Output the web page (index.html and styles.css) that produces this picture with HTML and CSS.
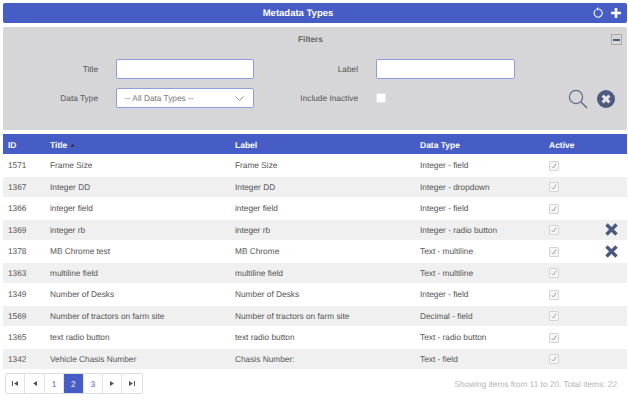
FILE: index.html
```html
<!DOCTYPE html>
<html lang="en">
<head>
    <meta charset="UTF-8">
    <title>Metadata Types</title>
    <link rel="stylesheet" href="styles.css">
</head>
<body>
    <div class="title-bar">
        <span class="title-text">Metadata Types</span>
        <div class="title-icons">
            <svg width="12" height="12" viewBox="0 0 12 12"><path d="M3.6 2.9A4.1 4.1 0 1 0 6.6 2" fill="none" stroke="#fff" stroke-width="1.1"/><path d="M6.4 0.2V3.8L3.9 2Z" fill="#fff"/></svg>
            <svg width="12" height="12" viewBox="0 0 12 12"><path d="M6 1V11M1 6H11" stroke="#fff" stroke-width="2.6"/></svg>
        </div>
    </div>

    <div class="filters">
        <div class="filters-head">
            <span>Filters</span>
            <span class="collapse"></span>
        </div>
        <div class="filter-grid">
            <label>Title</label>
            <input class="text-input" type="text">
            <label>Label</label>
            <input class="text-input" type="text">
            <span></span>

            <label>Data Type</label>
            <div class="text-input select">
                <span>-- All Data Types --</span>
                <svg width="9" height="5" viewBox="0 0 9 5"><path d="M0.5 0.5L4.5 4.5L8.5 0.5" fill="none" stroke="#777" stroke-width="0.8"/></svg>
            </div>
            <label>Include Inactive</label>
            <div class="check-wrap"><span class="white-check"></span></div>
            <div class="filter-actions">
                <svg width="20" height="20" viewBox="0 0 20 20"><circle cx="8" cy="8" r="6.6" fill="none" stroke="#5d6988" stroke-width="1.2"/><path d="M12.8 12.8L19 19" stroke="#5d6988" stroke-width="1.4"/></svg>
                <svg width="18" height="18" viewBox="0 0 18 18"><circle cx="9" cy="9" r="9" fill="#4d5a80"/><path d="M5.6 5.6L12.4 12.4M12.4 5.6L5.6 12.4" stroke="#e6e6e6" stroke-width="3"/></svg>
            </div>
        </div>
    </div>

    <table class="grid">
        <thead>
            <tr>
                <th class="col-id">ID</th>
                <th class="col-title">Title <span class="sort">&#9650;</span></th>
                <th class="col-label">Label</th>
                <th class="col-type">Data Type</th>
                <th class="col-active">Active</th>
                <th class="col-del"></th>
            </tr>
        </thead>
        <tbody id="rows"></tbody>
    </table>

    <div class="footer">
        <div class="pager">
            <a class="arrow"><svg width="6" height="5" viewBox="0 0 6 5"><path d="M0 0H1V5H0ZM6 0V5L2 2.5Z" fill="#555"/></svg></a>
            <a class="arrow"><svg width="4" height="5" viewBox="0 0 4 5"><path d="M4 0V5L0 2.5Z" fill="#555"/></svg></a>
            <a>1</a>
            <a class="current">2</a>
            <a>3</a>
            <a class="arrow"><svg width="4" height="5" viewBox="0 0 4 5"><path d="M0 0V5L4 2.5Z" fill="#555"/></svg></a>
            <a class="arrow"><svg width="6" height="5" viewBox="0 0 6 5"><path d="M0 0V5L4 2.5ZM5 0H6V5H5Z" fill="#555"/></svg></a>
        </div>
        <span class="summary">Showing items from 11 to 20. Total items: 22</span>
    </div>

    <script>
        const rows = [
            [1571, 'Frame Size', 'Frame Size', 'Integer - field'],
            [1367, 'Integer DD', 'Integer DD', 'Integer - dropdown'],
            [1366, 'integer field', 'integer field', 'Integer - field'],
            [1369, 'integer rb', 'integer rb', 'Integer - radio button', true],
            [1378, 'MB Chrome test', 'MB Chrome', 'Text - multiline', true],
            [1363, 'multiline field', 'multiline field', 'Text - multiline'],
            [1349, 'Number of Desks', 'Number of Desks', 'Integer - field'],
            [1569, 'Number of tractors on farm site', 'Number of tractors on farm site', 'Decimal - field'],
            [1365, 'text radio button', 'text radio button', 'Text - radio button'],
            [1342, 'Vehicle Chasis Number', 'Chasis Number:', 'Text - field']
        ];
        const check = '<span class="check"><svg width="6" height="6" viewBox="0 0 6 6"><path d="M0.8 3.4L2.4 5L5.2 0.6" fill="none" stroke="#999" stroke-width="0.9"/></svg></span>';
        const del = '<svg class="del" width="13" height="13" viewBox="0 0 13 13"><path d="M1.5 1.5L11.5 11.5M11.5 1.5L1.5 11.5" stroke="#4d5a80" stroke-width="3.4"/></svg>';

        document.getElementById('rows').innerHTML = rows.map(r =>
            `<tr><td>${r[0]}</td><td>${r[1]}</td><td>${r[2]}</td><td>${r[3]}</td><td>${check}</td><td class="del-cell">${r[4] ? del : ''}</td></tr>`
        ).join('');
    </script>
</body>
</html>
```

FILE: styles.css
```css
* {
    box-sizing: border-box;
}
body {
    margin: 0;
    padding: 3px 1px 0 3px;
    font-family: "Liberation Sans", Arial, sans-serif;
    font-size: 8.3px;
    text-rendering: geometricPrecision;
    color: #555;
    background: #fff;
}
.title-bar {
    position: relative;
    display: flex;
    justify-content: center;
    align-items: center;
    height: 20px;
    padding-right: 34px;
    background: #475dc6;
    border-radius: 2px;
    color: #fff;
    font-size: 9.5px;
    font-weight: bold;
}
.title-icons {
    position: absolute;
    right: 5px;
    top: 4px;
    display: flex;
    gap: 6px;
}
.filters {
    margin-top: 4px;
    height: 103px;
    background: #d6d6d8;
    border-radius: 2px;
}
.filters-head {
    position: relative;
    padding: 7px 9px 0 0;
    text-align: center;
    font-weight: bold;
    line-height: 10px;
    color: #666;
}
.collapse {
    position: absolute;
    right: 5px;
    top: 7px;
    width: 11px;
    height: 11px;
    border: 1px solid #aaa;
    background: linear-gradient(#4d5a80, #4d5a80) center / 7px 2px no-repeat;
}
.filter-grid {
    display: grid;
    grid-template-columns: 113px 138px 122px 139px 1fr;
    grid-template-rows: 20px 20px;
    row-gap: 9px;
    margin-top: 15px;
    align-items: center;
}
.filter-grid label {
    text-align: right;
    padding-right: 18px;
}
.text-input {
    height: 20px;
    border: 1px solid #8f9cdd;
    border-radius: 2px;
    background: #fff;
    padding: 0;
}
.select {
    display: flex;
    justify-content: space-between;
    align-items: center;
    padding: 0 9px 0 8px;
    color: #777;
}
.check-wrap {
    display: flex;
}
.white-check {
    width: 10px;
    height: 10px;
    background: #fff;
    border: 1px solid #dfe2f4;
    border-radius: 1px;
}
.filter-actions {
    display: flex;
    align-items: center;
    gap: 9px;
    justify-content: flex-end;
    padding: 2px 12px 0 0;
}
.grid {
    width: 624px;
    margin-top: 4px;
    border-collapse: separate;
    border-spacing: 0;
    table-layout: fixed;
}
.grid th {
    height: 21px;
    padding: 1px 0 0 5px;
    background: #475dc6;
    background-clip: padding-box;
    border-bottom: 1px solid #fff;
    color: #fff;
    font-size: 8.5px;
    text-align: left;
}
.grid .sort {
    font-size: 6px;
    color: #333;
    vertical-align: 1px;
}
.col-id { width: 42px; }
.col-title { width: 185px; }
.col-label { width: 185px; }
.col-type { width: 129px; }
.col-active { width: 55px; }
.grid td {
    height: 21.5px;
    padding: 0 0 0 5px;
    border-bottom: 1px solid #fff;
}
.grid tbody tr:nth-child(even) td {
    background: #f0f0f0;
    background-clip: padding-box;
}
.check {
    display: inline-flex;
    justify-content: center;
    align-items: center;
    width: 10px;
    height: 10px;
    border: 1px solid #d4d4d4;
    border-radius: 1px;
    background: #f6f6f6;
    vertical-align: middle;
}
.del {
    display: block;
    margin-left: 1px;
}
.footer {
    display: flex;
    justify-content: space-between;
    align-items: center;
    padding: 3px 10px 0 2px;
}
.pager {
    display: flex;
    border: 1px solid #ddd;
    border-radius: 2px;
    height: 21px;
}
.pager a {
    display: flex;
    justify-content: center;
    align-items: center;
    width: 19.4px;
    color: #475dc6;
    border-right: 1px solid #e4e4e4;
}
.pager a:last-child {
    border-right: none;
}
.pager .current {
    background: #475dc6;
    color: #fff;
}
.summary {
    color: #b4b4b4;
}
```
